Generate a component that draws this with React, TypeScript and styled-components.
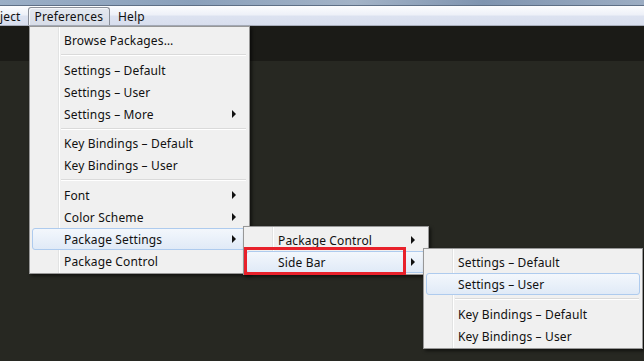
import React from 'react';
import styled, { createGlobalStyle, css } from 'styled-components';

const GlobalStyle = createGlobalStyle`
  html, body {
    margin: 0;
    padding: 0;
    width: 644px;
    height: 361px;
    overflow: hidden;
    background: #272822;
  }
  * { box-sizing: border-box; }
`;

const Window = styled.div`
  position: relative;
  width: 644px;
  height: 361px;
  display: flex;
  flex-direction: column;
  font-family: "Noto Sans", "Noto Sans CJK SC", sans-serif;
  font-size: 12px;
  letter-spacing: 0.15px;
  color: #111;
`;

// blurred strip of the window title bar
const TitleStrip = styled.div`
  height: 6px;
  background: linear-gradient(90deg, #9aaec6 0%, #8aa0bb 30%, #a3b3c7 55%, #7f94b0 75%, #9cadc3 100%);
  border-bottom: 1px solid #5e6f86;
`;

const MenuBar = styled.div`
  height: 20px;
  display: flex;
  align-items: stretch;
  padding-top: 1px;
  background: linear-gradient(#fbfcfe 0%, #eef1f8 45%, #dce2f0 55%, #d8deee 100%);
  border-bottom: 1px solid #a7adba;
`;

const BarItem = styled.div<{ $open?: boolean; $cut?: boolean }>`
  display: flex;
  align-items: center;
  padding: 0 6px;
  margin-right: 1px;
  border: 1px solid transparent;
  border-radius: 3px 3px 0 0;
  ${p => p.$cut && css`
    padding: 0 5px 0 0;
    border-left: none;
  `}
  ${p => p.$open && css`
    border-color: #8a8f99;
    border-bottom: none;
    background: linear-gradient(#e4e8f0, #d8dde8);
    box-shadow: inset 1px 1px 0 #f4f6fa;
  `}
`;

const Editor = styled.div`
  flex: 1;
  display: flex;
  flex-direction: column;
`;

const TabStrip = styled.div`
  height: 35px;
  background: #1b1b17;
`;

const Code = styled.div`
  flex: 1;
  background: #272822;
`;

const Menu = styled.div<{ $x: number; $y: number; $w: number }>`
  position: absolute;
  left: ${p => p.$x}px;
  top: ${p => p.$y}px;
  width: ${p => p.$w}px;
  padding: 2px 0 1px;
  border: 1px solid #979797;
  background:
    linear-gradient(90deg, transparent 28px, #e2e3e3 28px, #e2e3e3 29px, #ffffff 29px, #ffffff 30px, transparent 30px),
    #f0f0f0;
  box-shadow: 2px 2px 3px rgba(0, 0, 0, 0.55);
`;

const Item = styled.div<{ $active?: boolean }>`
  height: 22px;
  margin: 0 2px;
  padding: 0 10px 0 31px;
  display: flex;
  align-items: center;
  justify-content: space-between;
  border: 1px solid transparent;
  border-radius: 3px;
  white-space: nowrap;
  ${p => p.$active && css`
    border-color: #aecbee;
    background: linear-gradient(#f3f7fc, #e0eaf7);
  `}
`;

const Arrow = styled.span`
  width: 0;
  height: 0;
  border-top: 4px solid transparent;
  border-bottom: 4px solid transparent;
  border-left: 4px solid #111;
`;

const Separator = styled.div<{ $h?: number }>`
  height: ${p => p.$h ?? 8}px;
  margin-left: 31px;
  margin-right: 3px;
  display: flex;
  flex-direction: column;
  justify-content: center;
  &::before {
    content: '';
    height: 1px;
    background: #dadada;
    border-bottom: 1px solid #ffffff;
    box-sizing: content-box;
  }
`;

const Callout = styled.div`
  position: absolute;
  left: 244px;
  top: 247px;
  width: 162px;
  height: 28px;
  border: 3px solid #e8212b;
`;

type Entry = { label?: string; sub?: boolean; active?: boolean; sep?: number };

const mainMenu: Entry[] = [
  { label: 'Browse Packages…' },
  { sep: 8 },
  { label: 'Settings – Default' },
  { label: 'Settings – User' },
  { label: 'Settings – More', sub: true },
  { sep: 7 },
  { label: 'Key Bindings – Default' },
  { label: 'Key Bindings – User' },
  { sep: 8 },
  { label: 'Font', sub: true },
  { label: 'Color Scheme', sub: true },
  { label: 'Package Settings', sub: true, active: true },
  { label: 'Package Control' },
];

const packageMenu: Entry[] = [
  { label: 'Package Control', sub: true },
  { label: 'Side Bar', sub: true, active: true },
];

const sideBarMenu: Entry[] = [
  { label: 'Settings – Default' },
  { label: 'Settings – User', active: true },
  { sep: 8 },
  { label: 'Key Bindings – Default' },
  { label: 'Key Bindings – User' },
];

const MenuList = ({ items }: { items: Entry[] }) => (
  <>
    {items.map((e, i) =>
      e.sep ? (
        <Separator key={i} $h={e.sep} />
      ) : (
        <Item key={i} $active={e.active}>
          <span>{e.label}</span>
          {e.sub && <Arrow />}
        </Item>
      )
    )}
  </>
);

export default function App() {
  return (
    <Window>
      <GlobalStyle />
      <TitleStrip />
      <MenuBar>
        <BarItem $cut>ject</BarItem>
        <BarItem $open>Preferences</BarItem>
        <BarItem>Help</BarItem>
      </MenuBar>
      <Editor>
        <TabStrip />
        <Code />
      </Editor>

      <Menu $x={29} $y={26} $w={221}>
        <MenuList items={mainMenu} />
      </Menu>
      <Menu $x={243} $y={226} $w={186}>
        <MenuList items={packageMenu} />
      </Menu>
      <Menu $x={423} $y={248} $w={220}>
        <MenuList items={sideBarMenu} />
      </Menu>
      <Callout />
    </Window>
  );
}
